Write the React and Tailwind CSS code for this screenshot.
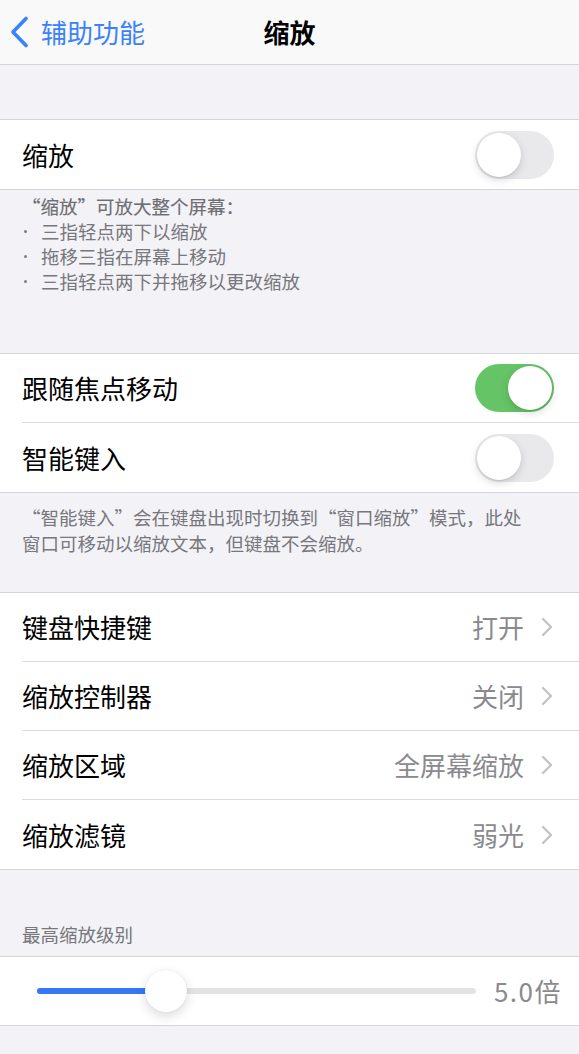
const FONT = { fontFamily: '"Noto Sans CJK SC", "Noto Sans", sans-serif' };

const Toggle = ({ on }) => (
  <div
    className={
      on
        ? 'relative h-[48px] w-[79px] shrink-0 rounded-full bg-[#65c466]'
        : 'relative h-[48px] w-[79px] shrink-0 rounded-full bg-[#e9e9eb]'
    }
  >
    <div
      className={
        on
          ? 'absolute right-[2px] top-[2px] h-[44px] w-[44px] rounded-full bg-white shadow-[0_3px_8px_rgba(0,0,0,0.15),0_1px_1px_rgba(0,0,0,0.08)]'
          : 'absolute left-[2px] top-[2px] h-[44px] w-[44px] rounded-full bg-white shadow-[0_3px_8px_rgba(0,0,0,0.15),0_1px_1px_rgba(0,0,0,0.08)]'
      }
    />
  </div>
);

// one cell of a grouped list; inset hairline under every cell but the last
const Cell = ({ label, children, last, pr = 'pr-[25px]' }) => (
  <div className="bg-white pl-[22px]">
    <div
      className={
        last
          ? `flex h-[69px] items-center justify-between ${pr}`
          : `flex h-[69px] items-center justify-between border-b border-[#dcdce0] ${pr}`
      }
    >
      <span className="text-[26px] leading-none text-black">{label}</span>
      {children}
    </div>
  </div>
);

const Disclosure = () => (
  <svg width="12" height="20" viewBox="0 0 12 20" fill="none" className="shrink-0">
    <path
      d="M2 2l8 8-8 8"
      stroke="#c4c4c7"
      strokeWidth="2.4"
      strokeLinecap="round"
      strokeLinejoin="round"
    />
  </svg>
);

const Detail = ({ value }) => (
  <div className="flex items-center gap-[17px]">
    <span className="text-[26px] leading-none text-[#8a8a8e]">{value}</span>
    <Disclosure />
  </div>
);

const Bullet = ({ children }) => (
  <div className="flex items-center">
    <span className="flex w-[19px] justify-start pl-[2px]">
      <span className="h-[3px] w-[3px] rounded-full bg-[#7d7d82]" />
    </span>
    <span>{children}</span>
  </div>
);

export default function App() {
  const sliderPct = 29.5;

  return (
    <div style={FONT} className="min-h-[1054px] w-full bg-[#f2f2f7]">
      {/* navigation bar */}
      <div className="relative flex h-[65px] items-center border-b border-[#d6d6da] bg-[#f9f9f9]">
        <div className="flex items-center pl-[10px] text-[#3a82f7]">
          <svg width="20" height="32" viewBox="0 0 20 32" fill="none">
            <path
              d="M16 2.5L3 16l13 13.5"
              stroke="currentColor"
              strokeWidth="3.6"
              strokeLinecap="round"
              strokeLinejoin="round"
            />
          </svg>
          <span className="ml-[11px] text-[26px] leading-none">辅助功能</span>
        </div>
        <div className="absolute left-0 right-0 text-center text-[26px] font-bold leading-none text-black">
          缩放
        </div>
      </div>

      <div className="h-[54px]" />

      <div className="border-y border-[#d6d6da]">
        <Cell label="缩放" last>
          <Toggle on={false} />
        </Cell>
      </div>

      <div className="h-[163px] px-[22px] pt-[4px] text-[18.5px] leading-[25px] text-[#77777c]">
        <div className="text-[#6e6e73] [-webkit-text-stroke:0.15px_#6e6e73]">“缩放”可放大整个屏幕：</div>
        <Bullet>三指轻点两下以缩放</Bullet>
        <Bullet>拖移三指在屏幕上移动</Bullet>
        <Bullet>三指轻点两下并拖移以更改缩放</Bullet>
      </div>

      <div className="border-y border-[#d6d6da]">
        <Cell label="跟随焦点移动">
          <Toggle on />
        </Cell>
        <Cell label="智能键入" last>
          <Toggle on={false} />
        </Cell>
      </div>

      <div className="h-[99px] px-[22px] pt-[11px] text-[18.5px] leading-[26px] text-[#77777c]">
        “智能键入”会在键盘出现时切换到“窗口缩放”模式，此处
        <br />
        窗口可移动以缩放文本，但键盘不会缩放。
      </div>

      <div className="border-y border-[#d6d6da]">
        <Cell label="键盘快捷键" pr="pr-[26px]">
          <Detail value="打开" />
        </Cell>
        <Cell label="缩放控制器" pr="pr-[26px]">
          <Detail value="关闭" />
        </Cell>
        <Cell label="缩放区域" pr="pr-[26px]">
          <Detail value="全屏幕缩放" />
        </Cell>
        <Cell label="缩放滤镜" last pr="pr-[26px]">
          <Detail value="弱光" />
        </Cell>
      </div>

      <div className="flex h-[86px] items-end px-[22px] pb-[13px] text-[18.5px] leading-none text-[#77777c]">
        最高缩放级别
      </div>

      {/* max zoom slider */}
      <div className="flex h-[70px] items-center border-y border-[#d6d6da] bg-white pl-[37px] pr-[17px]">
        <div className="relative h-[6px] flex-1 rounded-full bg-[#e3e3e6]">
          <div
            className="absolute left-0 top-0 h-full rounded-full bg-[#3478f6]"
            style={{ width: `${sliderPct}%` }}
          />
          <div
            className="absolute top-1/2 h-[42px] w-[42px] -translate-x-1/2 -translate-y-1/2 rounded-full bg-white shadow-[0_4px_12px_rgba(0,0,0,0.15),0_0_1px_rgba(0,0,0,0.1)]"
            style={{ left: `${sliderPct}%` }}
          />
        </div>
        <span className="ml-[18px] text-[26px] leading-none tracking-[1.5px] text-[#8a8a8e]">5.0倍</span>
      </div>
    </div>
  );
}
